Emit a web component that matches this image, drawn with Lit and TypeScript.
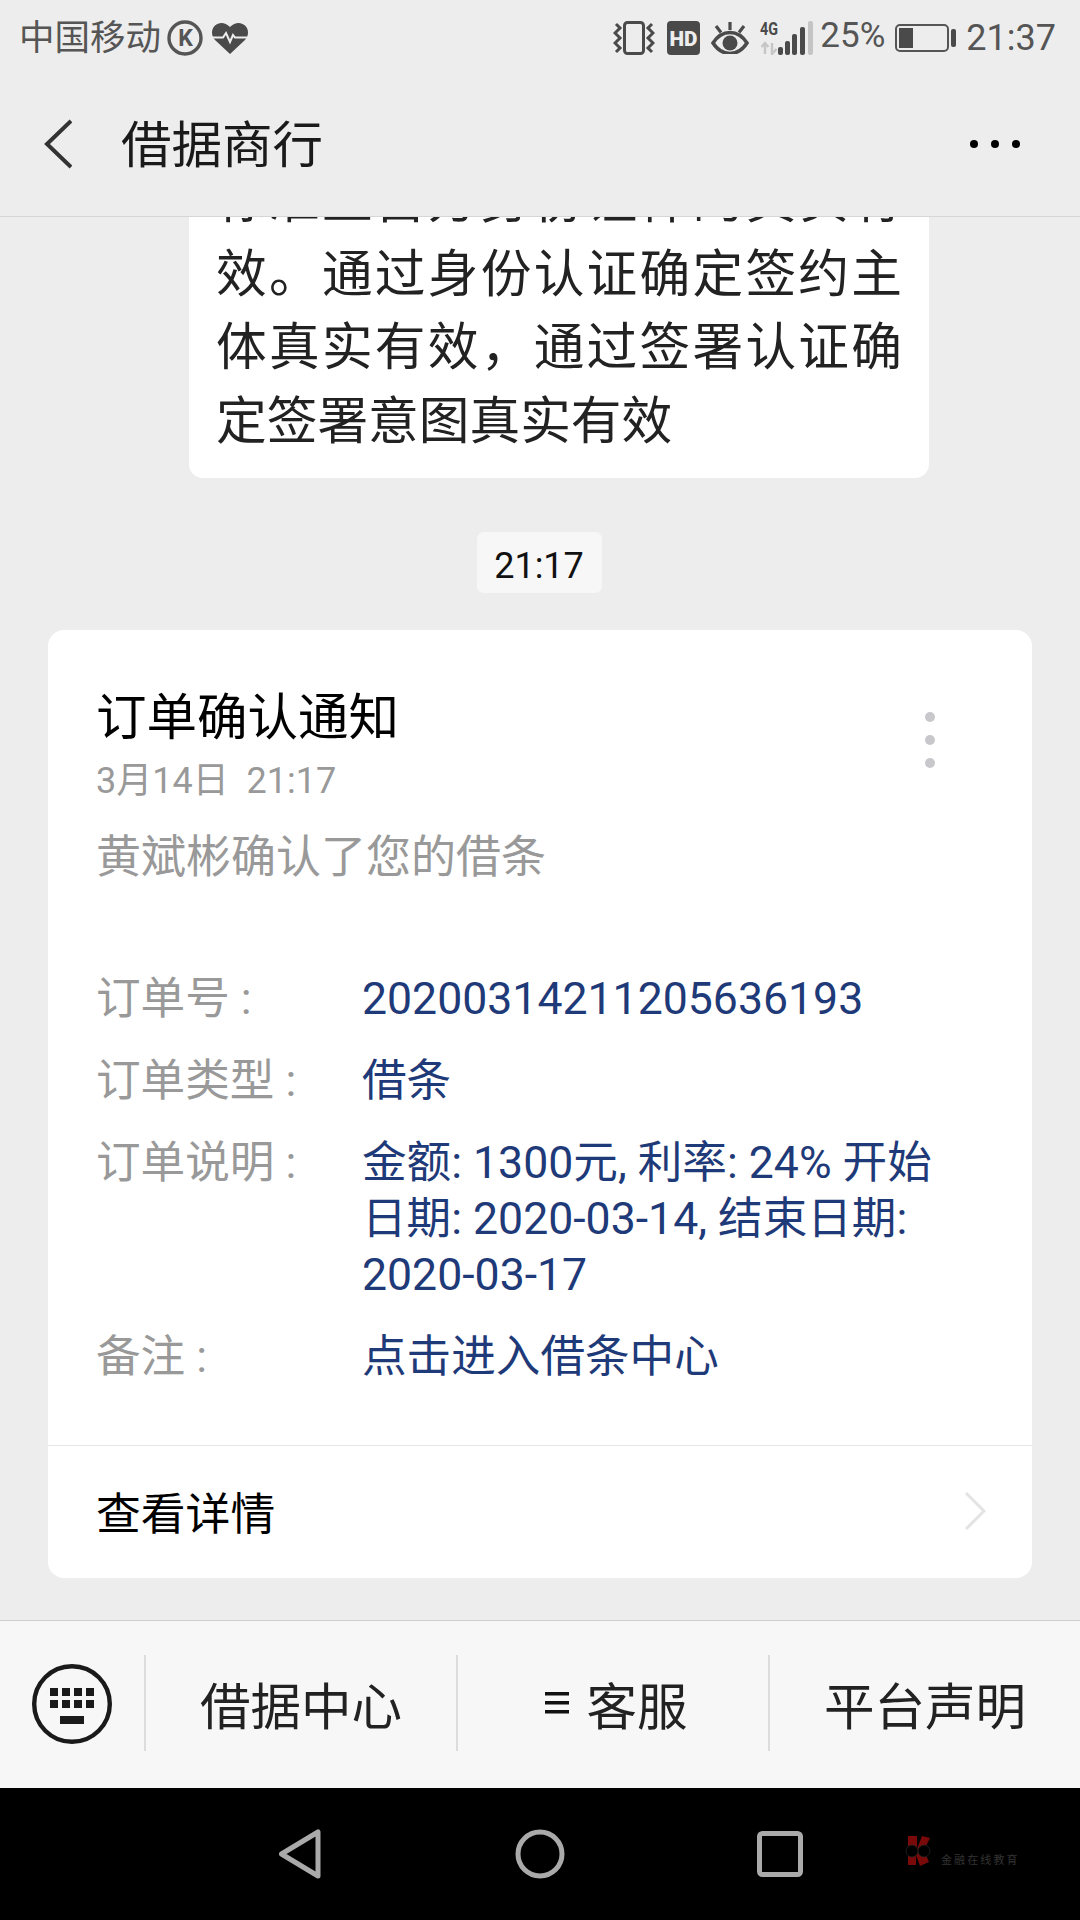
import { LitElement, html, css } from 'lit';
import { customElement } from 'lit/decorators.js';

const BUBBLE_TEXT =
  '标准上自方身份证件的真实有效。通过身份认证确定签约主体真实有效，通过签署认证确定签署意图真实有效';

@customElement('app-root')
export class AppRoot extends LitElement {
  static styles = css`
    :host {
      display: block;
      width: 1080px;
      height: 1920px;
      font-family: Roboto, 'Noto Sans CJK SC', sans-serif;
    }
    .page {
      position: relative;
      display: flex;
      flex-direction: column;
      height: 1920px;
      background: #ededed;
      overflow: hidden;
    }
    svg {
      display: block;
      flex: none;
    }

    /* status bar */
    .status {
      display: flex;
      align-items: center;
      box-sizing: border-box;
      height: 72px;
      flex: none;
      padding: 3px 24px 0 19px;
      color: #555;
    }
    .carrier {
      font-size: 35.5px;
      line-height: 68px;
    }
    .k-icon {
      margin-left: 6px;
    }
    .heart-icon {
      margin-left: 9px;
    }
    .status-right {
      display: flex;
      align-items: center;
      margin-left: auto;
    }
    .percent {
      font-size: 35px;
      margin: -5px 0 0 7px;
    }
    .batt {
      margin-left: 10px;
    }
    .clock {
      font-size: 36px;
      margin-left: 10px;
    }

    /* title bar */
    .header {
      display: flex;
      align-items: center;
      height: 144px;
      flex: none;
      padding: 0 0 0 44px;
      border-bottom: 1px solid #d6d6d6;
    }
    .header-title {
      font-size: 50.5px;
      color: #1a1a1a;
      margin: 0 0 7px 49px;
    }
    .more {
      display: flex;
      gap: 13px;
      margin-left: auto;
      padding-right: 60px;
    }
    .more i {
      width: 8px;
      height: 8px;
      border-radius: 50%;
      background: #000;
    }

    /* messages */
    .chat {
      flex: 1;
      min-height: 0;
      display: flex;
      flex-direction: column;
      justify-content: flex-end;
      align-items: center;
      padding-bottom: 42px;
      overflow: hidden;
    }
    .bubble {
      flex: none;
      width: 740px;
      margin-left: 38px;
      box-sizing: border-box;
      padding: 0 27px 20px;
      background: #fff;
      border-radius: 14px;
      font-size: 50.7px;
      line-height: 73.5px;
      text-align: justify;
      color: #222;
    }
    .pill {
      flex: none;
      width: 125px;
      height: 61px;
      margin: 54px 2px 37px 0;
      border-radius: 7px;
      background: #f7f7f7;
      font-size: 36px;
      line-height: 68px;
      text-align: center;
      color: #111;
    }

    /* order card */
    .card {
      flex: none;
      width: 984px;
      background: #fff;
      border-radius: 16px;
    }
    .card-body {
      padding: 58px 97px 60px 48px;
    }
    .card-head {
      display: flex;
      justify-content: space-between;
    }
    .card-title {
      font-size: 50.5px;
      line-height: 60px;
      color: #000;
    }
    .card-date {
      font-size: 36px;
      line-height: 44px;
      margin-top: 11px;
      color: #999;
      white-space: pre;
    }
    .card-dots {
      display: flex;
      flex-direction: column;
      gap: 13px;
      margin-top: 24px;
    }
    .card-dots i {
      width: 10px;
      height: 10px;
      border-radius: 50%;
      background: #c8c8cc;
    }
    .card-sub {
      font-size: 45px;
      line-height: 56px;
      margin-top: 27px;
      color: #999;
    }
    .rows {
      display: grid;
      grid-template-columns: 266px 1fr;
      row-gap: 26px;
      margin-top: 85px;
      font-size: 44.6px;
      line-height: 56px;
      white-space: nowrap;
    }
    .label {
      color: #999;
    }
    .value {
      color: #1f3a78;
    }
    .card-foot {
      display: flex;
      align-items: center;
      justify-content: space-between;
      box-sizing: border-box;
      height: 133px;
      padding: 0 46px 3px 48px;
      border-top: 1px solid #e6e6e6;
      font-size: 44.8px;
      color: #000;
    }

    /* bottom menu */
    .menu {
      display: flex;
      align-items: center;
      box-sizing: border-box;
      height: 168px;
      flex: none;
      padding-bottom: 4px;
      background: #f7f7f7;
      border-top: 1.5px solid #cfcfcf;
    }
    .kbd {
      display: flex;
      justify-content: center;
      width: 144px;
      flex: none;
      margin-top: 2px;
    }
    .menu-item {
      display: flex;
      align-items: center;
      justify-content: center;
      gap: 18px;
      flex: 1;
      height: 96px;
      box-sizing: border-box;
      border-left: 2px solid #dcdcdc;
      font-size: 50.5px;
      color: #222;
    }

    /* system navigation */
    .nav {
      display: grid;
      grid-template-columns: repeat(3, 240px);
      justify-items: center;
      align-items: center;
      height: 132px;
      flex: none;
      padding-left: 180px;
      background: #000;
    }
    .mark {
      position: absolute;
      left: 905px;
      top: 1835px;
      display: flex;
      align-items: flex-end;
      gap: 10px;
    }
    .mark span {
      font-size: 11px;
      letter-spacing: 2.1px;
      line-height: 12px;
      color: #333;
      margin-bottom: -1px;
      white-space: nowrap;
    }
  `;

  render() {
    return html`
      <div class="page">
        <div class="status">
          <span class="carrier">中国移动</span>
          <svg class="k-icon" width="36" height="36" viewBox="0 0 36 36">
            <circle cx="18" cy="18" r="16" fill="none" stroke="#555" stroke-width="3.4" />
            <text x="18.500" y="26" text-anchor="middle" font-family="Roboto" font-weight="700" font-size="23" fill="#555">K</text>
          </svg>
          <svg class="heart-icon" width="36" height="32" viewBox="0 0 36 32">
            <path d="M18 32L3 18C-1 14-1 7 3 3.500C7 0 13 0 18 5C23 0 29 0 33 3.500C37 7 37 14 33 18Z" fill="#4a4a4a" />
            <path d="M0 15.500H11L14 11L18 20L21 13L23 15.500H36" fill="none" stroke="#ededed" stroke-width="2" />
          </svg>
          <div class="status-right">
            <svg width="42" height="34" viewBox="0 0 42 34">
              <rect x="11.500" y="1.500" width="19" height="31" rx="3" fill="none" stroke="#4a4a4a" stroke-width="3" />
              <path d="M3 3L7 7L2 12L7 17L2 22L7 27L3 31M39 3L35 7L40 12L35 17L40 22L35 27L39 31" fill="none" stroke="#4a4a4a" stroke-width="3" />
            </svg>
            <svg style="margin-left:12px" width="33" height="34" viewBox="0 0 33 34">
              <rect width="33" height="34" rx="4" fill="#4a4a4a" />
              <text x="16.500" y="24.500" text-anchor="middle" font-family="Roboto" font-weight="900" font-size="21" textLength="28" lengthAdjust="spacingAndGlyphs" fill="#ededed">HD</text>
            </svg>
            <svg style="margin-left:11px" width="38" height="32" viewBox="0 0 38 32">
              <path d="M2 21C11 7 27 7 36 21C27 35 11 35 2 21Z" fill="none" stroke="#4a4a4a" stroke-width="3.600" />
              <circle cx="19" cy="21" r="7.500" fill="#4a4a4a" />
              <path d="M19 0V8M5 4L10 10.500M33 4L28 10.500" fill="none" stroke="#4a4a4a" stroke-width="3.200" />
            </svg>
            <svg style="margin-left:11px" width="53" height="34" viewBox="0 0 53 34">
              <text x="0" y="14" font-family="Roboto" font-weight="700" font-size="19" textLength="18" lengthAdjust="spacingAndGlyphs" fill="#4a4a4a">4G</text>
              <path d="M5 33V22M1.500 26L5 22L8.500 26M12 22V33L16.500 28" fill="none" stroke="#c6c6c6" stroke-width="2.400" />
              <rect x="18" y="26" width="5" height="8" rx="2" fill="#4a4a4a" />
              <rect x="25" y="20" width="5" height="14" rx="2" fill="#4a4a4a" />
              <rect x="32" y="13" width="5" height="21" rx="2" fill="#4a4a4a" />
              <rect x="40" y="6" width="5" height="28" rx="2" fill="#4a4a4a" />
              <rect x="48" y="0" width="5" height="34" rx="2" fill="#c4c4c4" />
            </svg>
            <span class="percent">25%</span>
            <svg class="batt" width="61" height="28" viewBox="0 0 61 28">
              <rect x="1" y="1" width="52" height="26" rx="4" fill="none" stroke="#555" stroke-width="2" />
              <rect x="4" y="4" width="14" height="20" fill="#4a4a4a" />
              <rect x="56" y="5" width="5" height="18" rx="2" fill="#4a4a4a" />
            </svg>
            <span class="clock">21:37</span>
          </div>
        </div>

        <div class="header">
          <svg width="28" height="50" viewBox="0 0 28 50">
            <path d="M27 2L3 25L27 48" fill="none" stroke="#333" stroke-width="4" />
          </svg>
          <span class="header-title">借据商行</span>
          <div class="more"><i></i><i></i><i></i></div>
        </div>

        <div class="chat">
          <div class="bubble">${BUBBLE_TEXT}</div>
          <div class="pill">21:17</div>
          <div class="card">
            <div class="card-body">
              <div class="card-head">
                <div>
                  <div class="card-title">订单确认通知</div>
                  <div class="card-date">3月14日  21:17</div>
                </div>
                <div class="card-dots"><i></i><i></i><i></i></div>
              </div>
              <div class="card-sub">黄斌彬确认了您的借条</div>
              <div class="rows">
                <div class="label">订单号 :</div>
                <div class="value">20200314211205636193</div>
                <div class="label">订单类型 :</div>
                <div class="value">借条</div>
                <div class="label">订单说明 :</div>
                <div class="value">金额: 1300元, 利率: 24% 开始<br />日期: 2020-03-14, 结束日期:<br />2020-03-17</div>
                <div class="label">备注 :</div>
                <div class="value">点击进入借条中心</div>
              </div>
            </div>
            <div class="card-foot">
              <span>查看详情</span>
              <svg width="22" height="40" viewBox="0 0 22 40">
                <path d="M2 2L20 20L2 38" fill="none" stroke="#e3e3e3" stroke-width="3" />
              </svg>
            </div>
          </div>
        </div>

        <div class="menu">
          <div class="kbd">
            <svg width="80" height="80" viewBox="0 0 80 80" fill="#1a1a1a">
              <circle cx="40" cy="40" r="37.800" fill="none" stroke="#1a1a1a" stroke-width="4.400" />
              <rect x="18" y="24" width="8" height="8" /><rect x="30" y="24" width="8" height="8" />
              <rect x="42" y="24" width="8" height="8" /><rect x="54" y="24" width="8" height="8" />
              <rect x="18" y="36" width="8" height="8" /><rect x="30" y="36" width="8" height="8" />
              <rect x="42" y="36" width="8" height="8" /><rect x="54" y="36" width="8" height="8" />
              <rect x="28" y="52" width="24" height="8" />
            </svg>
          </div>
          <div class="menu-item">借据中心</div>
          <div class="menu-item">
            <svg style="margin-left:6px" width="24" height="22" viewBox="0 0 24 22" fill="#111">
              <rect width="24" height="3.500" /><rect y="9" width="24" height="3.500" /><rect y="18" width="24" height="3.500" />
            </svg>
            客服
          </div>
          <div class="menu-item">平台声明</div>
        </div>

        <div class="nav">
          <svg width="44" height="50" viewBox="0 0 44 50">
            <path d="M3.500 25L40 3V47Z" fill="none" stroke="#aaa" stroke-width="5" stroke-linejoin="round" />
          </svg>
          <svg width="50" height="50" viewBox="0 0 50 50">
            <circle cx="25" cy="25" r="22" fill="none" stroke="#aaa" stroke-width="5" />
          </svg>
          <svg width="46" height="46" viewBox="0 0 46 46">
            <rect x="2.500" y="2.500" width="41" height="41" rx="3" fill="none" stroke="#aaa" stroke-width="5" />
          </svg>
        </div>

        <div class="mark">
          <svg width="26" height="31" viewBox="0 0 24 31">
            <path d="M2 1H11V14L16 1L24 3L18 15L23 27L14 31L10 20V30H2Z" fill="#7a0a0a" />
            <circle cx="6" cy="16" r="6" fill="#000" stroke="#222" stroke-width="0.800" />
            <circle cx="18" cy="16" r="6" fill="#000" stroke="#222" stroke-width="0.800" />
          </svg>
          <span>金融在线教育</span>
        </div>
      </div>
    `;
  }
}
